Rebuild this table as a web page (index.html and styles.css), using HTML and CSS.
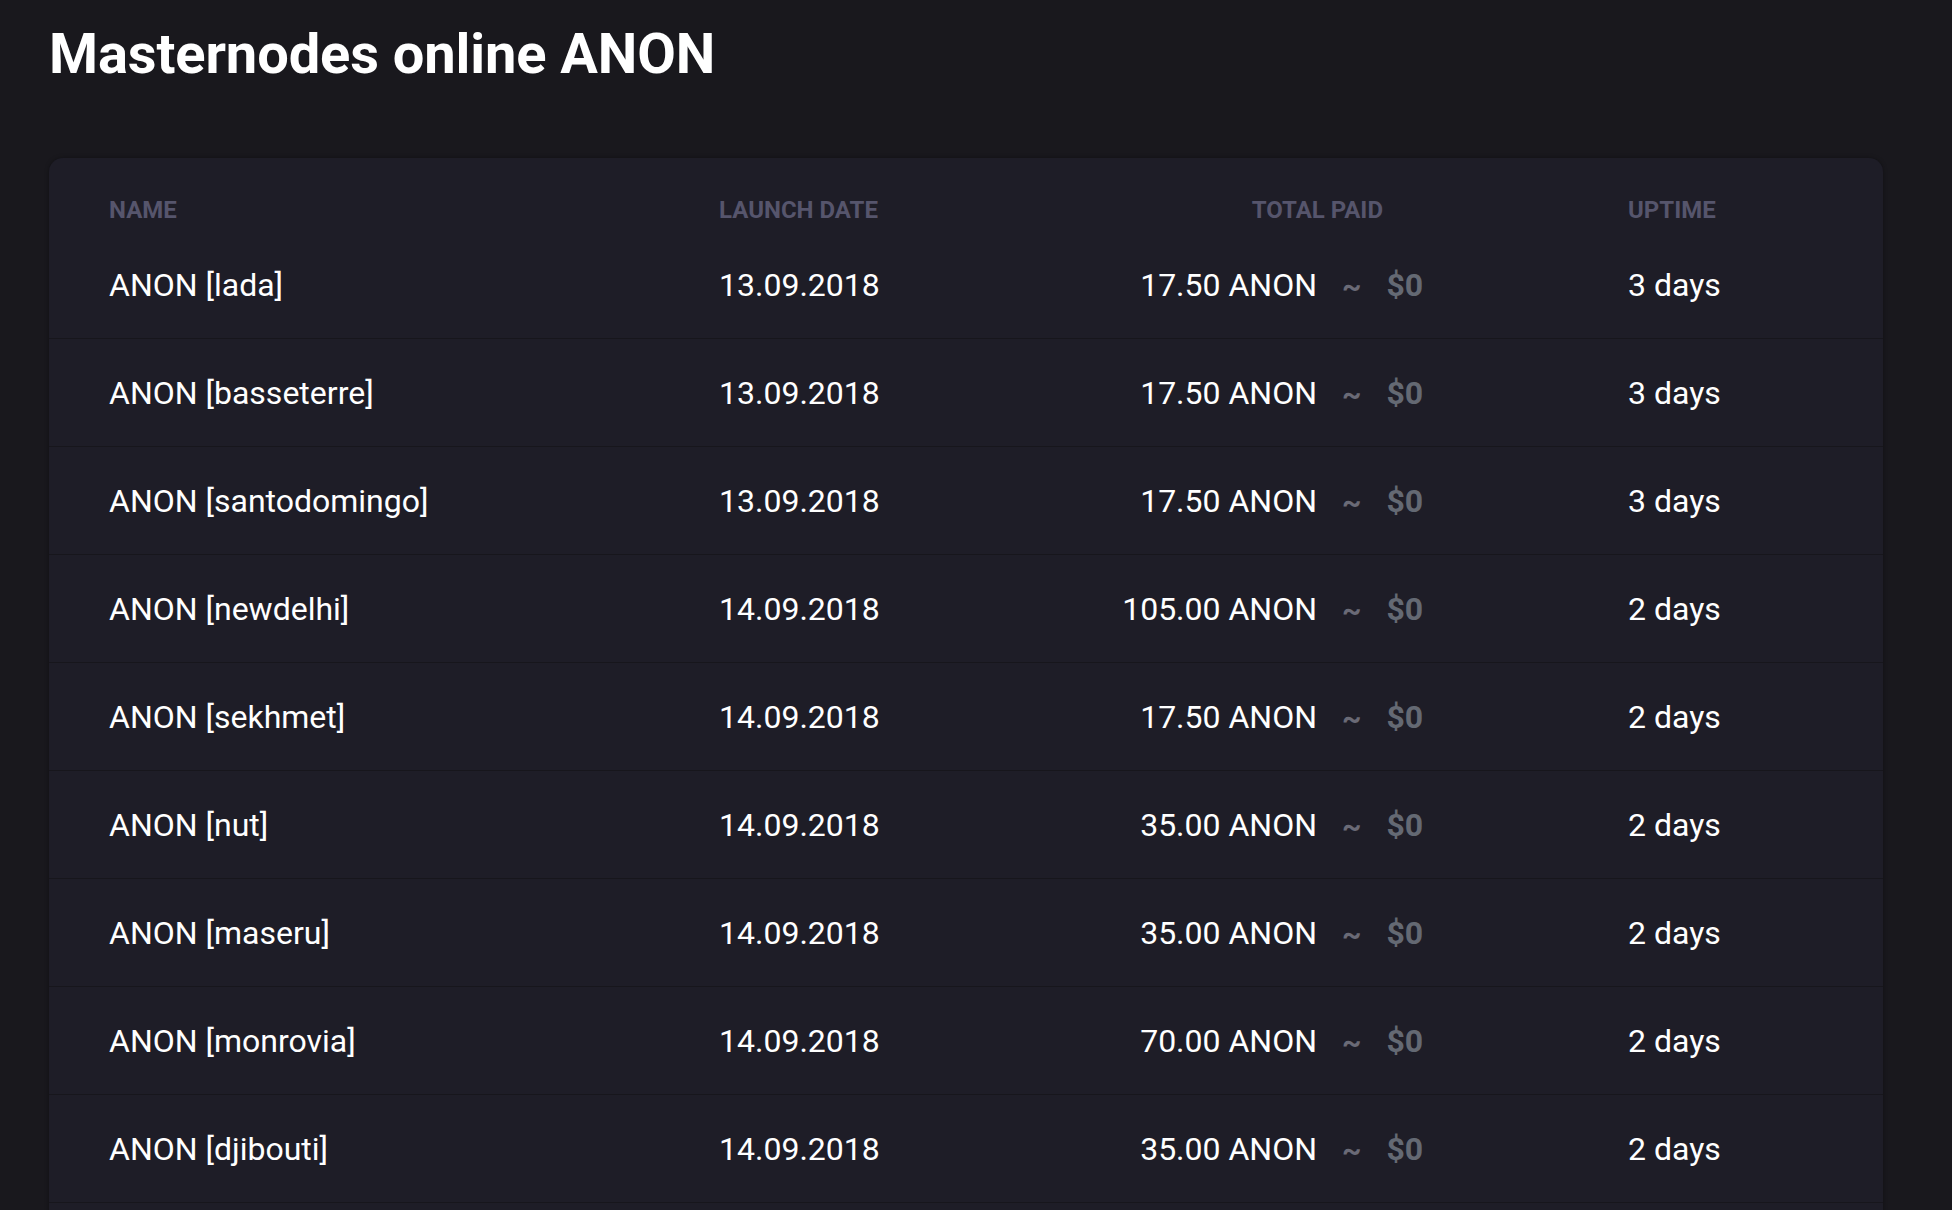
FILE: index.html
```html
<!DOCTYPE html>
<html lang="en">
<head>
<meta charset="utf-8">
<title>Masternodes online ANON</title>
<link rel="stylesheet" href="styles.css">
</head>
<body>
<div class="page">
  <h1 class="title">Masternodes online ANON</h1>
  <div class="card">
    <div class="row head">
      <div class="c-name">NAME</div>
      <div class="c-date">LAUNCH DATE</div>
      <div class="c-paid"><span class="paid-head">TOTAL PAID</span></div>
      <div class="c-up">UPTIME</div>
    </div>
    <div class="row">
      <div class="c-name">ANON [lada]</div>
      <div class="c-date">13.09.2018</div>
      <div class="c-paid"><span class="amt">17.50 ANON</span><span class="tilde">~</span><span class="usd">$0</span></div>
      <div class="c-up">3 days</div>
    </div>
    <div class="row">
      <div class="c-name">ANON [basseterre]</div>
      <div class="c-date">13.09.2018</div>
      <div class="c-paid"><span class="amt">17.50 ANON</span><span class="tilde">~</span><span class="usd">$0</span></div>
      <div class="c-up">3 days</div>
    </div>
    <div class="row">
      <div class="c-name">ANON [santodomingo]</div>
      <div class="c-date">13.09.2018</div>
      <div class="c-paid"><span class="amt">17.50 ANON</span><span class="tilde">~</span><span class="usd">$0</span></div>
      <div class="c-up">3 days</div>
    </div>
    <div class="row">
      <div class="c-name">ANON [newdelhi]</div>
      <div class="c-date">14.09.2018</div>
      <div class="c-paid"><span class="amt">105.00 ANON</span><span class="tilde">~</span><span class="usd">$0</span></div>
      <div class="c-up">2 days</div>
    </div>
    <div class="row">
      <div class="c-name">ANON [sekhmet]</div>
      <div class="c-date">14.09.2018</div>
      <div class="c-paid"><span class="amt">17.50 ANON</span><span class="tilde">~</span><span class="usd">$0</span></div>
      <div class="c-up">2 days</div>
    </div>
    <div class="row">
      <div class="c-name">ANON [nut]</div>
      <div class="c-date">14.09.2018</div>
      <div class="c-paid"><span class="amt">35.00 ANON</span><span class="tilde">~</span><span class="usd">$0</span></div>
      <div class="c-up">2 days</div>
    </div>
    <div class="row">
      <div class="c-name">ANON [maseru]</div>
      <div class="c-date">14.09.2018</div>
      <div class="c-paid"><span class="amt">35.00 ANON</span><span class="tilde">~</span><span class="usd">$0</span></div>
      <div class="c-up">2 days</div>
    </div>
    <div class="row">
      <div class="c-name">ANON [monrovia]</div>
      <div class="c-date">14.09.2018</div>
      <div class="c-paid"><span class="amt">70.00 ANON</span><span class="tilde">~</span><span class="usd">$0</span></div>
      <div class="c-up">2 days</div>
    </div>
    <div class="row">
      <div class="c-name">ANON [djibouti]</div>
      <div class="c-date">14.09.2018</div>
      <div class="c-paid"><span class="amt">35.00 ANON</span><span class="tilde">~</span><span class="usd">$0</span></div>
      <div class="c-up">2 days</div>
    </div>
  </div>
</div>
</body>
</html>
```
FILE: styles.css
```css
html, body {
  margin: 0;
  padding: 0;
  background: #19181d;
  font-family: Roboto, "Liberation Sans", Arial, sans-serif;
  color: #ffffff;
  overflow: hidden;
}

.page {
  padding: 21px 69px 0 49px;
}

.title {
  margin: 0;
  font-size: 56px;
  line-height: 66px;
  font-weight: 700;
  color: #ffffff;
  letter-spacing: -0.1px;
}

.card {
  margin-top: 71px;
  background: #1e1d27;
  border-radius: 14px;
  box-shadow: 0 0 4px rgba(0, 0, 0, 0.35);
  padding-bottom: 60px;
}

.row {
  display: grid;
  grid-template-columns: 610px 281px 628px 1fr;
  align-items: center;
  height: 107px;
  padding-left: 60px;
  border-bottom: 1px solid #17161c;
  font-size: 32px;
  line-height: 38px;
  color: #ffffff;
}

.row.head {
  height: 28px;
  padding-top: 38px;
  padding-bottom: 7px;
  align-items: start;
  border-bottom: none;
  font-size: 24px;
  line-height: 28px;
  font-weight: 700;
  color: #56556c;
}

.c-paid {
  display: flex;
  align-items: center;
}

.paid-head {
  display: block;
  width: 383px;
  text-align: right;
}

.amt {
  display: block;
  width: 317px;
  text-align: right;
}

.tilde {
  margin-left: 25px;
  color: #6a6a76;
  font-size: 30px;
  font-weight: 700;
  position: relative;
  top: 2px;
}

.usd {
  margin-left: 25px;
  color: #646973;
  font-weight: 700;
}
```
